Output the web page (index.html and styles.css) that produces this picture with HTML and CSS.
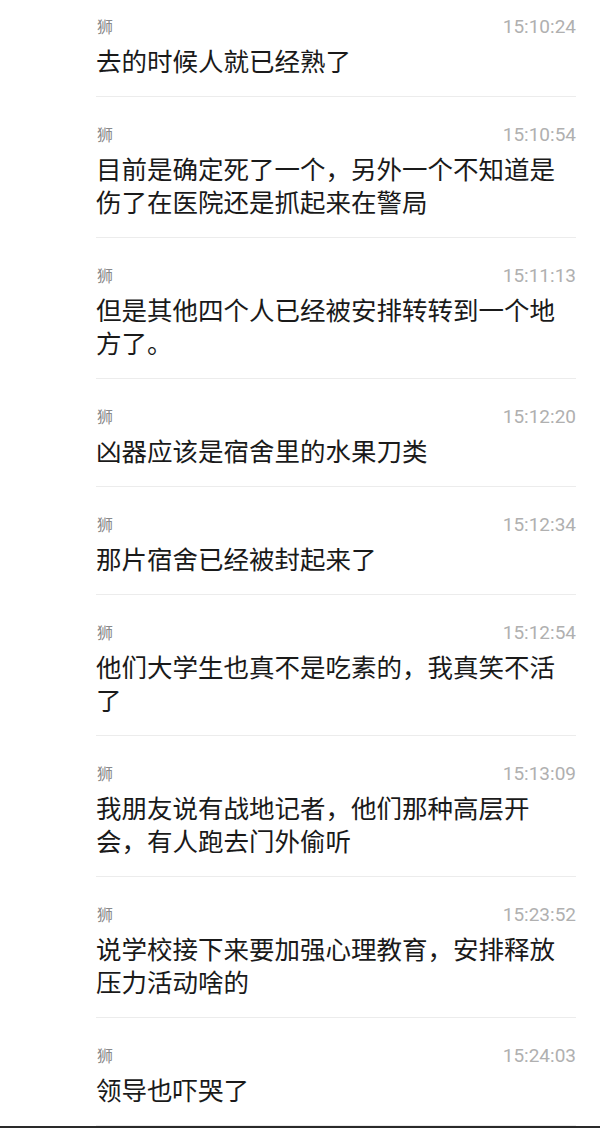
FILE: index.html
```html
<!DOCTYPE html>
<html lang="zh-CN">
<head>
    <meta charset="UTF-8">
    <meta name="viewport" content="width=device-width, initial-scale=1.0">
    <title>聊天记录</title>
    <link rel="stylesheet" href="styles.css">
</head>
<body>
    <div class="chat-list">
        <div class="chat-item">
            <div class="chat-head"><span class="chat-name">狮</span><span class="chat-time">15:10:24</span></div>
            <div class="chat-text">去的时候人就已经熟了</div>
        </div>
        <div class="chat-item">
            <div class="chat-head"><span class="chat-name">狮</span><span class="chat-time">15:10:54</span></div>
            <div class="chat-text">目前是确定死了一个，另外一个不知道是伤了在医院还是抓起来在警局</div>
        </div>
        <div class="chat-item">
            <div class="chat-head"><span class="chat-name">狮</span><span class="chat-time">15:11:13</span></div>
            <div class="chat-text">但是其他四个人已经被安排转转到一个地方了。</div>
        </div>
        <div class="chat-item">
            <div class="chat-head"><span class="chat-name">狮</span><span class="chat-time">15:12:20</span></div>
            <div class="chat-text">凶器应该是宿舍里的水果刀类</div>
        </div>
        <div class="chat-item">
            <div class="chat-head"><span class="chat-name">狮</span><span class="chat-time">15:12:34</span></div>
            <div class="chat-text">那片宿舍已经被封起来了</div>
        </div>
        <div class="chat-item">
            <div class="chat-head"><span class="chat-name">狮</span><span class="chat-time">15:12:54</span></div>
            <div class="chat-text">他们大学生也真不是吃素的，我真笑不活了</div>
        </div>
        <div class="chat-item">
            <div class="chat-head"><span class="chat-name">狮</span><span class="chat-time">15:13:09</span></div>
            <div class="chat-text">我朋友说有战地记者，他们那种高层开会，有人跑去门外偷听</div>
        </div>
        <div class="chat-item">
            <div class="chat-head"><span class="chat-name">狮</span><span class="chat-time">15:23:52</span></div>
            <div class="chat-text">说学校接下来要加强心理教育，安排释放压力活动啥的</div>
        </div>
        <div class="chat-item">
            <div class="chat-head"><span class="chat-name">狮</span><span class="chat-time">15:24:03</span></div>
            <div class="chat-text">领导也吓哭了</div>
        </div>
    </div>
    <div class="bottom-edge"></div>
</body>
</html>
```

FILE: styles.css
```css
body {
    margin: 0;
    background-color: #fff;
    font-family: "Noto Sans CJK SC", "Noto Sans", sans-serif;
    overflow: hidden;
}
.chat-list {
    margin-left: 96px;
    width: 480px;
}
.chat-item {
    padding: 27px 0 20px 0;
    border-bottom: 1px solid #ececec;
}
.chat-item:first-child {
    padding-top: 16px;
}
.chat-head {
    display: flex;
    justify-content: space-between;
    align-items: baseline;
    height: 20px;
    line-height: 20px;
}
.chat-name {
    font-size: 16px;
    color: #8a8a8a;
    padding-left: 1px;
}
.chat-time {
    font-family: Roboto, "Noto Sans", sans-serif;
    font-size: 19px;
    color: #b0b0b0;
}
.chat-text {
    margin-top: 7px;
    font-size: 25.5px;
    line-height: 33px;
    color: #1a1a1a;
}
.bottom-edge {
    height: 2px;
    background-color: #2a2a2a;
}
```
